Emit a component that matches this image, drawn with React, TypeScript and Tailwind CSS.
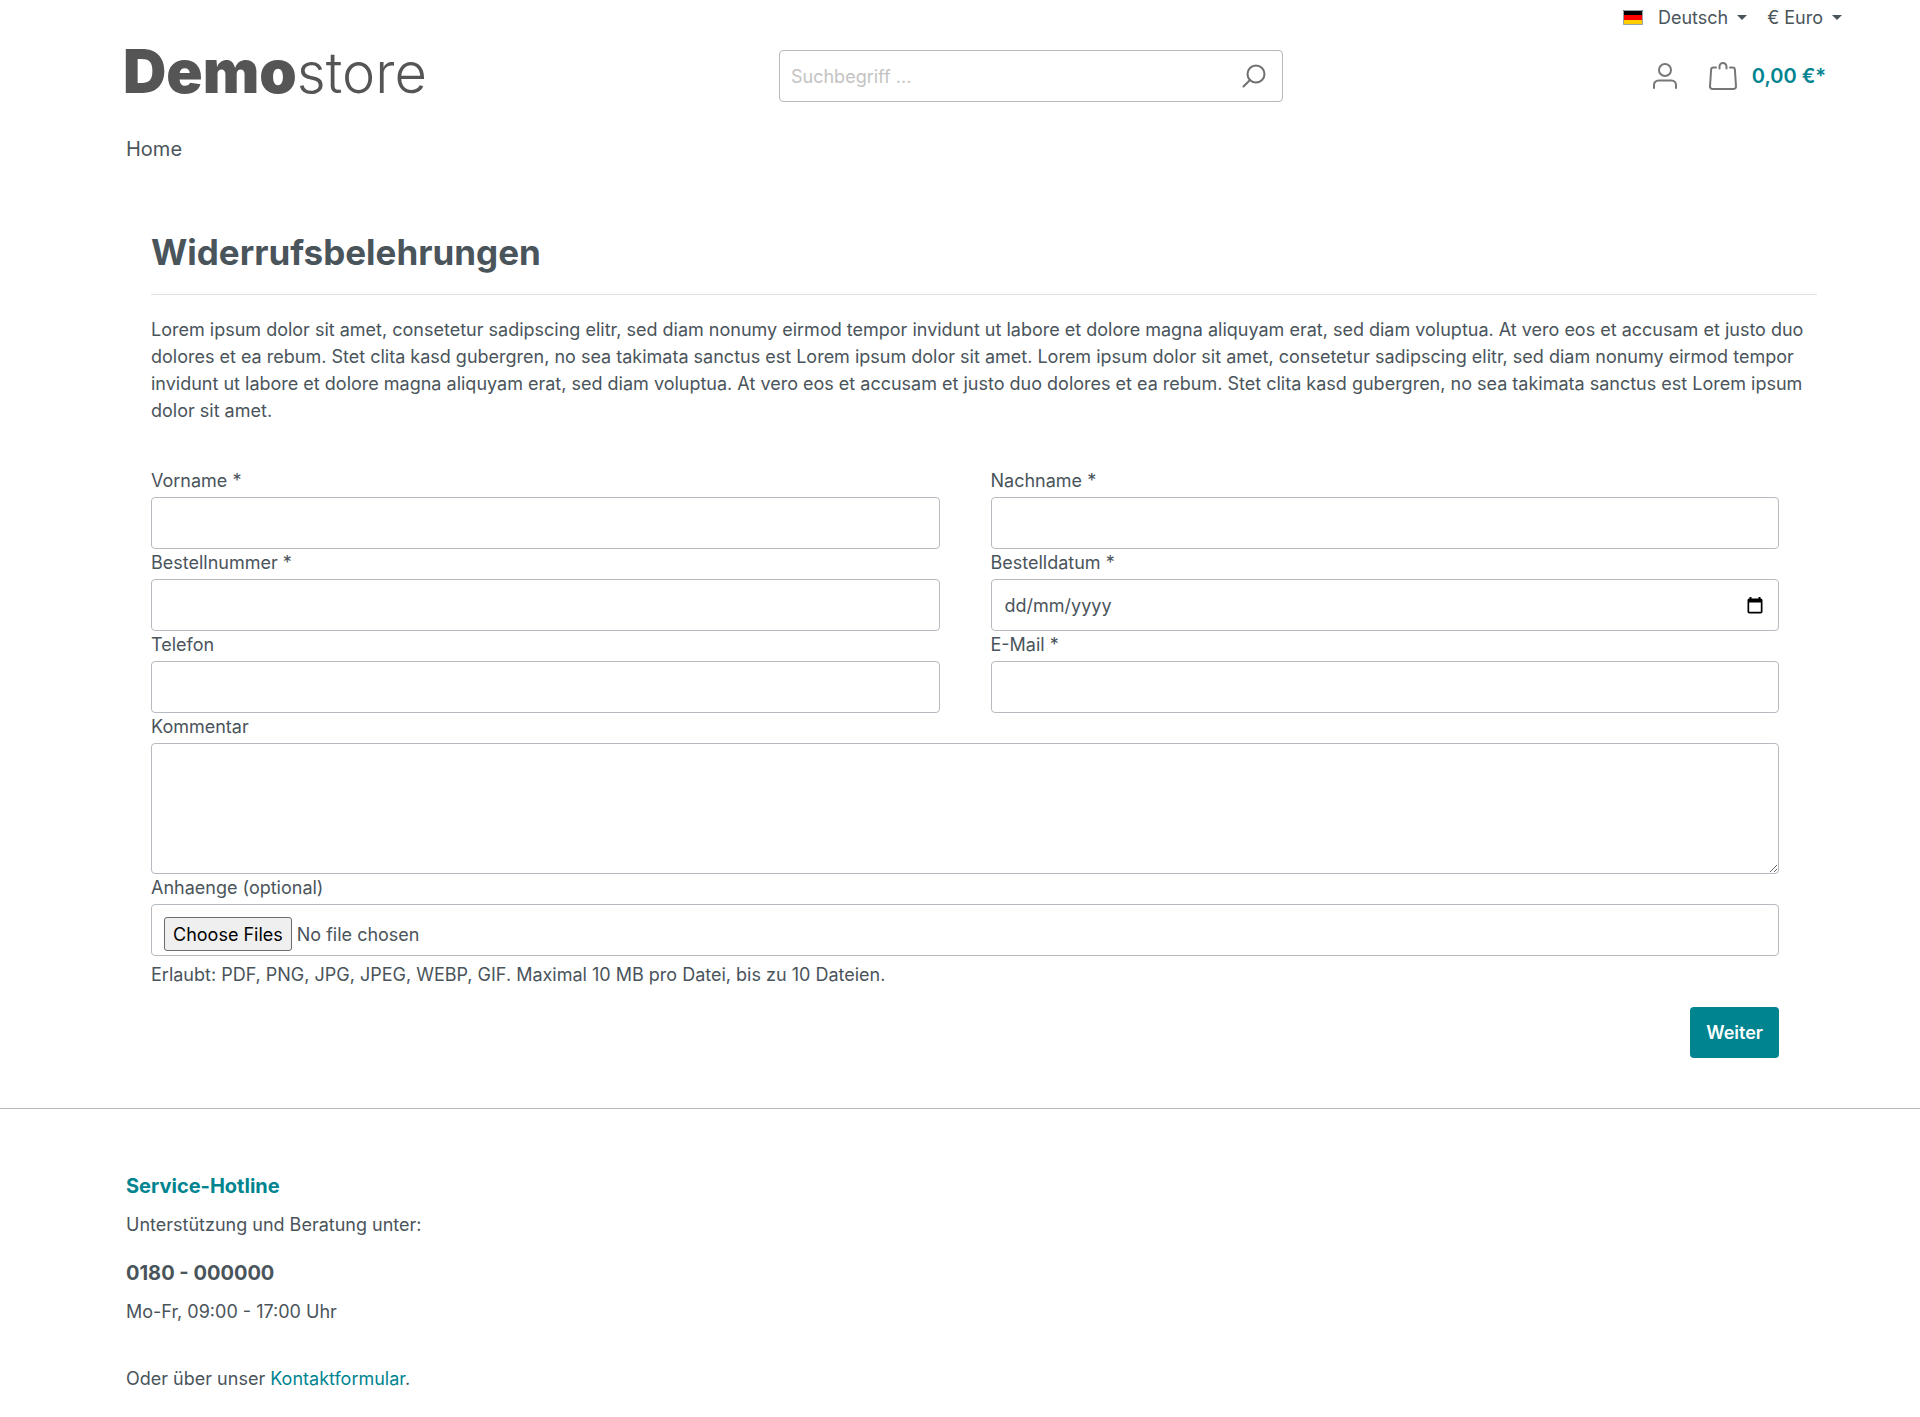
import type { ReactNode } from "react";

const control =
  "block w-full rounded-[4px] border border-[#b5bbc1] bg-white px-3 text-[18px] leading-[27px] text-[#4a545b] outline-none focus:border-[#008490]";

function Field({ id, label, children }: { id: string; label: string; children: ReactNode }) {
  return (
    <div>
      <label htmlFor={id} className="mb-[3px] block leading-[27px]">
        {label}
      </label>
      {children}
    </div>
  );
}

function TextField({ id, label, type = "text" }: { id: string; label: string; type?: string }) {
  return (
    <Field id={id} label={label}>
      <input id={id} name={id} type={type} className={`${control} h-[52px]`} />
    </Field>
  );
}

function Caret() {
  return (
    <svg viewBox="0 0 10 5" className="h-[5px] w-[10px]" fill="currentColor" aria-hidden="true">
      <path d="M0 0h10L5 5z" />
    </svg>
  );
}

function GermanFlag() {
  return (
    <svg viewBox="0 0 20 15" className="h-[15px] w-[20px]" aria-hidden="true">
      <path fill="#000" d="M0 0h20v5H0z" />
      <path fill="#f00" d="M0 5h20v5H0z" />
      <path fill="#ffcd00" d="M0 10h20v5H0z" />
      <path fill="none" stroke="#9aa3a8" d="M.5.5h19v14H.5z" />
    </svg>
  );
}

function TopBar() {
  return (
    <div className="flex h-[34px] items-center justify-end gap-5 pr-[78px]">
      <button type="button" className="flex items-center">
        <GermanFlag />
        <span className="ml-[15px] mr-[9px]">Deutsch</span>
        <Caret />
      </button>
      <button type="button" className="flex items-center">
        <span className="mr-[9px]">€ Euro</span>
        <Caret />
      </button>
    </div>
  );
}

function Header() {
  return (
    <header className="grid grid-cols-[656px_504px_1fr] items-start pl-[123px] pr-[94px] pt-4">
      <a href="#" className="flex items-baseline text-[60px] leading-[42px] text-[#555]">
        <span className="font-black">Demo</span>
        <span className="text-[56px] font-light">store</span>
      </a>
      <form className="flex h-[52px] items-center rounded-[4px] border border-[#b5bbc1] pl-[11px] pr-4">
        <input
          type="search"
          aria-label="Suchbegriff"
          placeholder="Suchbegriff ..."
          className="min-w-0 flex-1 bg-transparent text-[18px] outline-none placeholder:text-[#c3c3c3]"
        />
        <button type="button" aria-label="Suchen" className="text-[#6f6f6f]">
          <svg viewBox="0 0 24 24" className="h-[24px] w-[24px]" fill="none" stroke="currentColor" strokeWidth="2" strokeLinecap="round">
            <circle cx="14" cy="10" r="8.5" />
            <path d="M8 16l-6.5 6.5" />
          </svg>
        </button>
      </form>
      <div className="flex h-[52px] items-center justify-end">
        <button type="button" aria-label="Mein Konto">
          <svg viewBox="0 0 24 26" className="h-[26px] w-[24px]" fill="none" stroke="#777" strokeWidth="2" strokeLinecap="round">
            <circle cx="12" cy="7" r="6" />
            <path d="M1 25v-3a4.500 4.500 0 0 1 4.500-4.500h13a4.500 4.500 0 0 1 4.500 4.500v3" />
          </svg>
        </button>
        <button type="button" className="ml-8 flex items-center text-[20px] font-semibold text-[#008490]">
          <svg viewBox="0 0 28 28" className="mr-[15px] h-[28px] w-[28px]" fill="none" stroke="#777" strokeWidth="2" strokeLinecap="round" strokeLinejoin="round" aria-hidden="true">
            <path d="M7 5.500H4.500A2.400 2.400 0 0 0 2.100 7.800L1 24.400A2.500 2.500 0 0 0 3.500 27h21a2.500 2.500 0 0 0 2.500-2.600L25.900 7.800A2.400 2.400 0 0 0 23.500 5.500H21" />
            <path d="M10.500 6.500V4.500a3.500 3.500 0 0 1 7 0v2" />
          </svg>
          0,00 €*
        </button>
      </div>
    </header>
  );
}

export default function App() {
  return (
    <div className="min-h-screen bg-white font-['Inter',sans-serif] text-[18px] leading-[27px] text-[#4a545b]">
      <TopBar />
      <Header />
      <nav className="pl-[126px] pt-8 text-[20px] leading-[30px]">
        <a href="#">Home</a>
      </nav>

      <main className="pl-[151px] pr-[103px] pt-16">
        <h1 className="border-b border-[#dfe2e4] pb-[18px] text-[35px] font-bold leading-[48px]">Widerrufsbelehrungen</h1>
        <p className="pt-[21px]">
          Lorem ipsum dolor sit amet, consetetur sadipscing elitr, sed diam nonumy eirmod tempor invidunt ut labore et
          dolore magna aliquyam erat, sed diam voluptua. At vero eos et accusam et justo duo dolores et ea rebum. Stet
          clita kasd gubergren, no sea takimata sanctus est Lorem ipsum dolor sit amet. Lorem ipsum dolor sit amet,
          consetetur sadipscing elitr, sed diam nonumy eirmod tempor invidunt ut labore et dolore magna aliquyam erat,
          sed diam voluptua. At vero eos et accusam et justo duo dolores et ea rebum. Stet clita kasd gubergren, no sea
          takimata sanctus est Lorem ipsum dolor sit amet.
        </p>
        <form className="pr-[38px] pt-[43px]">
          <div className="grid grid-cols-2 gap-x-[51px]">
            <TextField id="vorname" label="Vorname *" />
            <TextField id="nachname" label="Nachname *" />
            <TextField id="bestellnummer" label="Bestellnummer *" />
            <Field id="bestelldatum" label="Bestelldatum *">
              <div className={`${control} flex h-[52px] items-center`}>
                <input
                  id="bestelldatum"
                  name="bestelldatum"
                  type="text"
                  placeholder="dd/mm/yyyy"
                  className="min-w-0 flex-1 pl-[1px] outline-none placeholder:text-[#4a545b]"
                />
                <button type="button" aria-label="Datum wählen" className="mr-[3px] text-black">
                  <svg viewBox="0 0 16 17" className="h-[17px] w-[16px]" fill="currentColor">
                    <path fillRule="evenodd" d="M2.500 0h2v1.500h7V0h2v1.500A1.800 1.800 0 0 1 15.500 3.200v11.500a1.800 1.800 0 0 1-1.800 1.800H2.300a1.800 1.800 0 0 1-1.800-1.800V3.200A1.800 1.800 0 0 1 2.500 1.500zM2.200 5.500v9.300h11.600V5.500z" />
                  </svg>
                </button>
              </div>
            </Field>
            <TextField id="telefon" label="Telefon" type="tel" />
            <TextField id="email" label="E-Mail *" type="email" />
          </div>
          <Field id="kommentar" label="Kommentar">
            <textarea id="kommentar" name="kommentar" className={`${control} h-[131px] resize-y`} />
          </Field>
          <Field id="anhaenge" label="Anhaenge (optional)">
            <input
              id="anhaenge"
              name="anhaenge"
              type="file"
              multiple
              className={`${control} h-[52px] pt-3 file:mr-[5px] file:h-[34px] file:rounded-[3px] file:border file:border-[#6b6b6b] file:bg-[#efefef] file:px-2 file:text-black`}
            />
          </Field>
          <p className="mt-[5px]">Erlaubt: PDF, PNG, JPG, JPEG, WEBP, GIF. Maximal 10 MB pro Datei, bis zu 10 Dateien.</p>
          <div className="mt-[19px] flex justify-end">
            <button type="submit" className="h-[51px] rounded-[4px] bg-[#008490] px-4 font-semibold text-white">
              Weiter
            </button>
          </div>
        </form>
      </main>

      <footer className="mt-[50px] border-t border-[#b5bbc1] pb-5 pl-[126px] pt-[62px]">
        <h2 className="text-[20px] font-bold leading-[30px] text-[#008490]">Service-Hotline</h2>
        <p className="mt-[10px]">Unterstützung und Beratung unter:</p>
        <p className="mt-5 text-[20px] font-bold leading-[30px]">
          <a href="tel:+49180000000">0180 - 000000</a>
        </p>
        <p className="mt-[10px]">Mo-Fr, 09:00 - 17:00 Uhr</p>
        <p className="mt-10">
          Oder über unser{" "}
          <a href="#" className="text-[#008490]">
            Kontaktformular
          </a>
          .
        </p>
      </footer>
    </div>
  );
}
